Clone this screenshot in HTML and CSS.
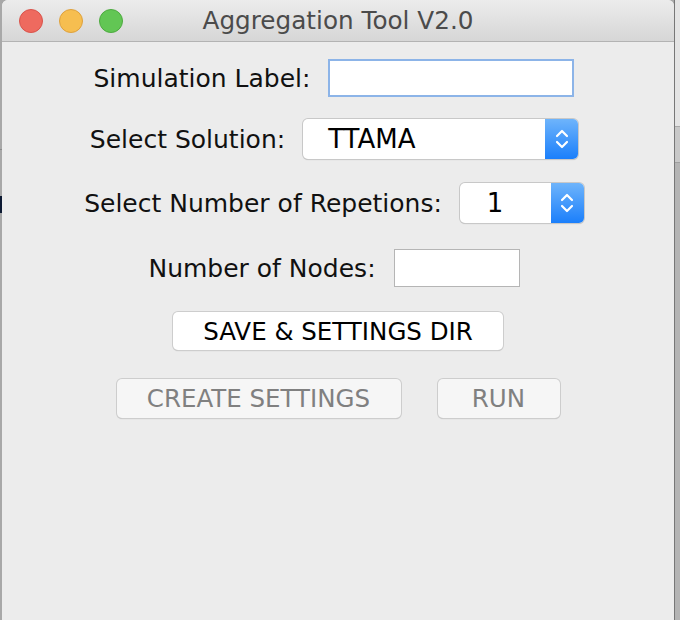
FILE: index.html
```html
<!DOCTYPE html>
<html>
<head>
<meta charset="utf-8">
<link rel="stylesheet" href="styles.css">
</head>
<body>
<div class="desk">
  <div class="window">
    <div class="titlebar">
      <div class="lights">
        <span class="light red"></span>
        <span class="light yellow"></span>
        <span class="light green"></span>
      </div>
      <div class="title">Aggregation Tool V2.0</div>
    </div>
    <div class="content">
      <div class="row lrow r1">
        <label class="lbl">Simulation Label:</label>
        <div class="field focus w-label"></div>
      </div>
      <div class="row lrow r2">
        <label class="lbl">Select Solution:</label>
        <div class="combo w-sol"><span class="combo-text">TTAMA</span><span class="arrows"><svg width="16" height="24" viewBox="0 0 16 24"><path d="M3 9 L8 4 L13 9 M3 15 L8 20 L13 15" fill="none" stroke="#fff" stroke-width="2.2" stroke-linecap="round" stroke-linejoin="round"/></svg></span></div>
      </div>
      <div class="row lrow r3">
        <label class="lbl">Select Number of Repetions:</label>
        <div class="combo w-rep"><span class="combo-text">1</span><span class="arrows"><svg width="16" height="24" viewBox="0 0 16 24"><path d="M3 9 L8 4 L13 9 M3 15 L8 20 L13 15" fill="none" stroke="#fff" stroke-width="2.2" stroke-linecap="round" stroke-linejoin="round"/></svg></span></div>
      </div>
      <div class="row lrow r4">
        <label class="lbl">Number of Nodes:</label>
        <div class="field w-nodes"></div>
      </div>
      <div class="row r5">
        <button class="btn w-save">SAVE &amp; SETTINGS DIR</button>
      </div>
      <div class="row r6">
        <button class="btn disabled w-create">CREATE SETTINGS</button>
        <button class="btn disabled w-run">RUN</button>
      </div>
    </div>
  </div>
  <div class="side"></div>
</div>
</body>
</html>
```

FILE: styles.css
```css
html, body {
  margin: 0;
  padding: 0;
}
body {
  width: 680px;
  height: 620px;
  overflow: hidden;
  background: linear-gradient(to bottom, #a8a8a8 0, #a8a8a8 149px, #6e6e6e 149px, #a8a8a8 150px, #a8a8a8 196px, #0d1a33 196px, #0d1a33 213px, #a8a8a8 213px);
  font-family: "DejaVu Sans", sans-serif;
}
.desk {
  display: flex;
  height: 620px;
  padding-left: 2px;
  box-sizing: border-box;
}
.window {
  width: 672px;
  height: 640px;
  background: #ececec;
  border-radius: 6px 6px 0 0;
  overflow: hidden;
  flex: none;
}
.side {
  flex: 1;
  background: linear-gradient(to bottom, #e4e4e4 0, #e4e4e4 126px, #8a8a8a 126px, #c8c8c8 127px, #c8c8c8 162px, #8a8a8a 162px, #b4b4b4 163px, #b4b4b4 100%);
  border-left: 1px solid #777;
}
.titlebar {
  height: 41px;
  border-bottom: 1px solid #b3b3b3;
  background: linear-gradient(to bottom, #ececec, #d6d6d6);
  display: flex;
  align-items: center;
  position: relative;
}
.lights {
  display: flex;
  gap: 16px;
  padding-left: 17px;
  padding-top: 1px;
}
.light {
  width: 24px;
  height: 24px;
  border-radius: 50%;
  box-sizing: border-box;
}
.red { background: #ee6a5f; border: 1px solid #d9534b; }
.yellow { background: #f6be50; border: 1px solid #dea13d; }
.green { background: #62c654; border: 1px solid #4daa3f; }
.title {
  position: absolute;
  left: 0;
  right: 0;
  top: 6px;
  text-align: center;
  font-size: 24.7px;
  color: #4b4b4b;
}
.content {
  display: flex;
  flex-direction: column;
  align-items: center;
  padding-top: 17px;
}
.row {
  display: flex;
  align-items: center;
  justify-content: center;
  width: 100%;
  box-sizing: border-box;
}
.lrow { padding-right: 8px; }
.r2 { margin-top: 22px; }
.r3 { margin-top: 24px; }
.r4 { margin-top: 26px; }
.r5 { margin-top: 25px; }
.r6 { margin-top: 29px; gap: 37px; }
.lbl {
  font-size: 25px;
  color: #111;
  margin-right: 18px;
}
.field {
  height: 38px;
  background: #fff;
  border: 1px solid #b5b5b5;
  box-sizing: border-box;
}
.field.focus {
  border: 2px solid #8cb4e8;
}
.w-label { width: 246px; }
.w-nodes { width: 126px; }
.combo {
  height: 40px;
  background: #fff;
  border-radius: 5px;
  box-shadow: 0 0 0 1px #c8c8c8, 0 1px 1px rgba(0,0,0,0.2);
  display: flex;
  align-items: center;
  overflow: hidden;
}
.w-sol { width: 275px; }
.w-rep { width: 124px; }
.combo-text {
  flex: 1;
  font-size: 26px;
  color: #000;
  padding-left: 25px;
}
.w-rep .combo-text { padding-left: 27px; }
.arrows {
  width: 33px;
  height: 40px;
  background: linear-gradient(to bottom, #6eb4fb, #1b7ffb);
  display: flex;
  align-items: center;
  justify-content: center;
}
.btn {
  height: 38px;
  background: #fff;
  border: none;
  border-radius: 5px;
  box-shadow: 0 0 0 1px #cdcdcd, 0 1px 1px rgba(0,0,0,0.25);
  font-family: "DejaVu Sans", sans-serif;
  font-size: 24.5px;
  color: #000;
  padding: 0;
}
.w-save { width: 330px; }
.btn.disabled {
  background: #f6f6f6;
  color: #808080;
  height: 39px;
}
.w-create { width: 284px; }
.w-run { width: 122px; }
```
